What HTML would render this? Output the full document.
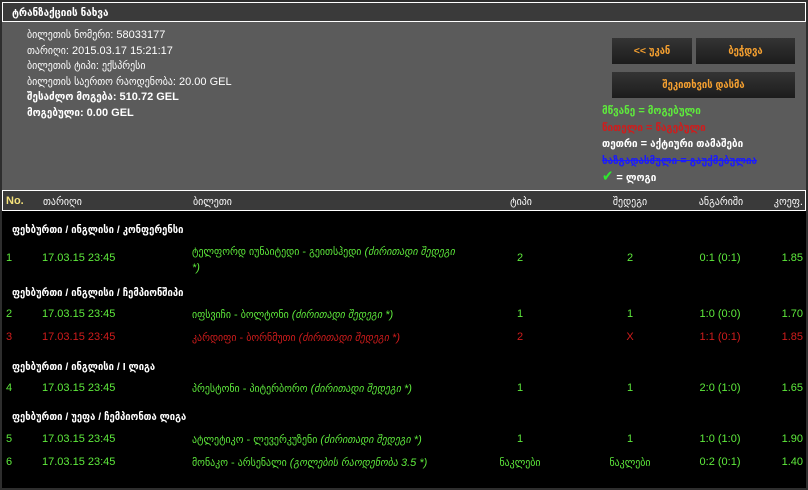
<!DOCTYPE html>
<html><head><meta charset="utf-8"><style>
*{margin:0;padding:0;box-sizing:border-box}
body{width:808px;height:490px;background:#2e2e2e;position:relative;overflow:hidden;font-family:"Liberation Sans","DejaVu Sans Condensed","DejaVu Sans",sans-serif;font-size:11px;color:#fff}
.a{position:absolute;white-space:nowrap}
#wrap{position:absolute;left:2px;top:2px;width:804px;height:486px;background:#000}
#title{position:absolute;left:0;top:0;width:804px;height:20px;background:#3a3a3a;border:1px solid #fff;font-weight:bold;padding:3px 9px;font-size:11px}
#info{position:absolute;left:0;top:20px;width:804px;height:168px;background:#5b5b5b}
#th{position:absolute;left:0;top:188px;width:804px;height:21px;background:#3a3a3a;border:1px solid #fff;color:#fff}
.btn{position:absolute;background:linear-gradient(#343434,#1c1c1c);color:#f5a030;font-weight:bold;text-align:center;font-size:10.5px;line-height:26px}
.g{color:#5eea3c}.r{color:#d01c1c}
.i{font-style:italic}
.c{transform:translateX(-50%)}
.rt{transform:translateX(-100%)}
.h{color:#fff;font-weight:bold;font-size:10.5px}
</style></head><body>
<div id="wrap">
<div id="title">ტრანზაქციის ნახვა</div>
<div id="info">
<div class="a" style="left:25px;top:6px;line-height:15.5px">ბილეთის ნომერი: 58033177<br>თარიღი: 2015.03.17 15:21:17<br>ბილეთის ტიპი: ექსპრესი<br>ბილეთის საერთო რაოდენობა: 20.00 GEL<br><b>შესაძლო მოგება: 510.72 GEL</b><br><b>მოგებული: 0.00 GEL</b></div>
<div class="btn" style="left:610px;top:16px;width:80px">&lt;&lt; უკან</div>
<div class="btn" style="left:694px;top:16px;width:99px">ბეჭდვა</div>
<div class="btn" style="left:610px;top:50px;width:183px">შეკითხვის დასმა</div>
<div class="a" style="left:600px;top:81px;line-height:16.5px;font-weight:bold">
<span class="g">მწვანე = მოგებული</span><br>
<span class="r">წითელი = წაგებული</span><br>
<span>თეთრი = აქტიური თამაშები</span><br>
<span style="color:#1a1aff;text-decoration:line-through">ხაზგადასმული = გაუქმებულია</span><br>
<span style="color:#2ee82e;font-size:15px">✔</span> <span>= ლოგი</span></div>
</div>
<div id="th">
<div class="a" style="left:3px;top:4px;color:#f5e27a;font-weight:bold">No.</div>
<div class="a" style="left:40px;top:4px">თარიღი</div>
<div class="a" style="left:190px;top:4px">ბილეთი</div>
<div class="a c" style="left:518px;top:4px">ტიპი</div>
<div class="a c" style="left:627px;top:4px">შედეგი</div>
<div class="a c" style="left:718px;top:4px">ანგარიში</div>
<div class="a rt" style="left:800px;top:4px">კოეფ.</div>
</div>

<div class="a h" style="left:10px;top:222px">ფეხბურთი / ინგლისი / კონფერენსი</div>
<div class="a g" style="left:4px;top:250px">1</div>
<div class="a g" style="left:40px;top:250px">17.03.15 23:45</div>
<div class="a g" style="left:190px;top:242px;line-height:16px">ტელფორდ იუნაიტედი - გეითსჰედი <span class="i">(ძირითადი შედეგი</span><br><span class="i">*)</span></div>
<div class="a g c" style="left:518px;top:250px">2</div><div class="a g c" style="left:628px;top:250px">2</div>
<div class="a g c" style="left:718px;top:250px">0:1 (0:1)</div><div class="a g rt" style="left:801px;top:250px">1.85</div>

<div class="a h" style="left:10px;top:285px">ფეხბურთი / ინგლისი / ჩემპიონშიპი</div>
<div class="a g" style="left:4px;top:306px">2</div>
<div class="a g" style="left:40px;top:306px">17.03.15 23:45</div>
<div class="a g" style="left:190px;top:306px">იფსვიჩი - ბოლტონი <span class="i">(ძირითადი შედეგი *)</span></div>
<div class="a g c" style="left:518px;top:306px">1</div><div class="a g c" style="left:628px;top:306px">1</div>
<div class="a g c" style="left:718px;top:306px">1:0 (0:0)</div><div class="a g rt" style="left:801px;top:306px">1.70</div>
<div class="a r" style="left:4px;top:329px">3</div>
<div class="a r" style="left:40px;top:329px">17.03.15 23:45</div>
<div class="a r" style="left:190px;top:329px">კარდიფი - ბორნმუთი <span class="i">(ძირითადი შედეგი *)</span></div>
<div class="a r c" style="left:518px;top:329px">2</div><div class="a r c" style="left:628px;top:329px">X</div>
<div class="a r c" style="left:718px;top:329px">1:1 (0:1)</div><div class="a r rt" style="left:801px;top:329px">1.85</div>

<div class="a h" style="left:10px;top:359px">ფეხბურთი / ინგლისი / I ლიგა</div>
<div class="a g" style="left:4px;top:380px">4</div>
<div class="a g" style="left:40px;top:380px">17.03.15 23:45</div>
<div class="a g" style="left:190px;top:380px">პრესტონი - პიტერბორო <span class="i">(ძირითადი შედეგი *)</span></div>
<div class="a g c" style="left:518px;top:380px">1</div><div class="a g c" style="left:628px;top:380px">1</div>
<div class="a g c" style="left:718px;top:380px">2:0 (1:0)</div><div class="a g rt" style="left:801px;top:380px">1.65</div>

<div class="a h" style="left:10px;top:409px">ფეხბურთი / უეფა / ჩემპიონთა ლიგა</div>
<div class="a g" style="left:4px;top:431px">5</div>
<div class="a g" style="left:40px;top:431px">17.03.15 23:45</div>
<div class="a g" style="left:190px;top:431px">ატლეტიკო - ლევერკუზენი <span class="i">(ძირითადი შედეგი *)</span></div>
<div class="a g c" style="left:518px;top:431px">1</div><div class="a g c" style="left:628px;top:431px">1</div>
<div class="a g c" style="left:718px;top:431px">1:0 (1:0)</div><div class="a g rt" style="left:801px;top:431px">1.90</div>
<div class="a g" style="left:4px;top:454px">6</div>
<div class="a g" style="left:40px;top:454px">17.03.15 23:45</div>
<div class="a g" style="left:190px;top:454px">მონაკო - არსენალი <span class="i">(გოლების რაოდენობა 3.5 *)</span></div>
<div class="a g c" style="left:518px;top:454px">ნაკლები</div><div class="a g c" style="left:628px;top:454px">ნაკლები</div>
<div class="a g c" style="left:718px;top:454px">0:2 (0:1)</div><div class="a g rt" style="left:801px;top:454px">1.40</div>
</div>
</body></html>
